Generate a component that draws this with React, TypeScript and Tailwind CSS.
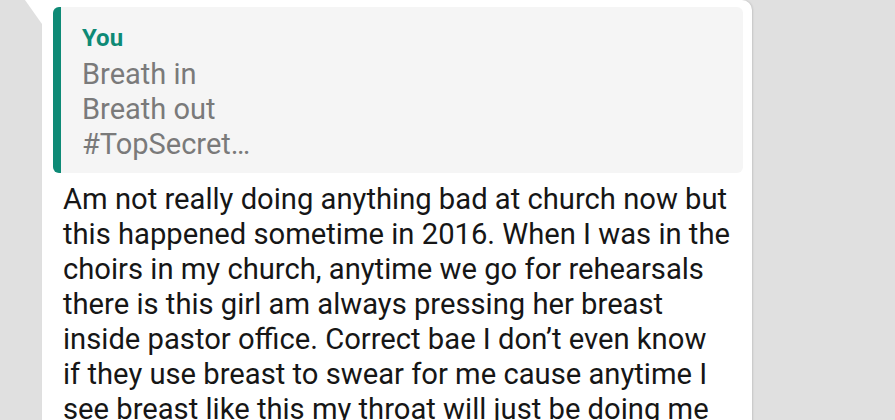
const lines = [
  "Am not really doing anything bad at church now but",
  "this happened sometime in 2016. When I was in the",
  "choirs in my church, anytime we go for rehearsals",
  "there is this girl am always pressing her breast",
  "inside pastor office. Correct bae I don\u2019t even know",
  "if they use breast to swear for me cause anytime I",
  "see breast like this my throat will just be doing me",
];

export default function App() {
  return (
    <div className="w-[895px] h-[420px] overflow-hidden bg-[#e0e0e0] font-['Roboto',sans-serif]">
      <div className="relative ml-[42px] w-[710px] h-[440px] bg-white rounded-tr-[10px] pt-[7px] pl-[11px] pr-[9px] shadow-[1px_0_2px_rgba(0,0,0,0.12)]">
        <svg className="absolute left-[-17px] top-0" width="17" height="24" viewBox="0 0 17 24">
          <polygon points="0,0 17,0 17,24" fill="#ffffff" />
        </svg>
        <div className="flex h-[166px] rounded-[6px] bg-[#f5f5f5] overflow-hidden">
          <div className="w-[8px] bg-[#0e8a76]" />
          <div className="pl-[21px] pt-[12px]">
            <div className="text-[24px] leading-[38px] font-bold text-[#0e8a76]">You</div>
            <div className="text-[29px] leading-[35px] text-[#7a7a7a]">
              <div>Breath in</div>
              <div>Breath out</div>
              <div>#TopSecret…</div>
            </div>
          </div>
        </div>
        <div className="mt-[9px] pl-[10px] text-[29.2px] leading-[35px] text-[#161616]">
          {lines.map((l) => (
            <div key={l} className="whitespace-nowrap">
              {l}
            </div>
          ))}
        </div>
      </div>
    </div>
  );
}
